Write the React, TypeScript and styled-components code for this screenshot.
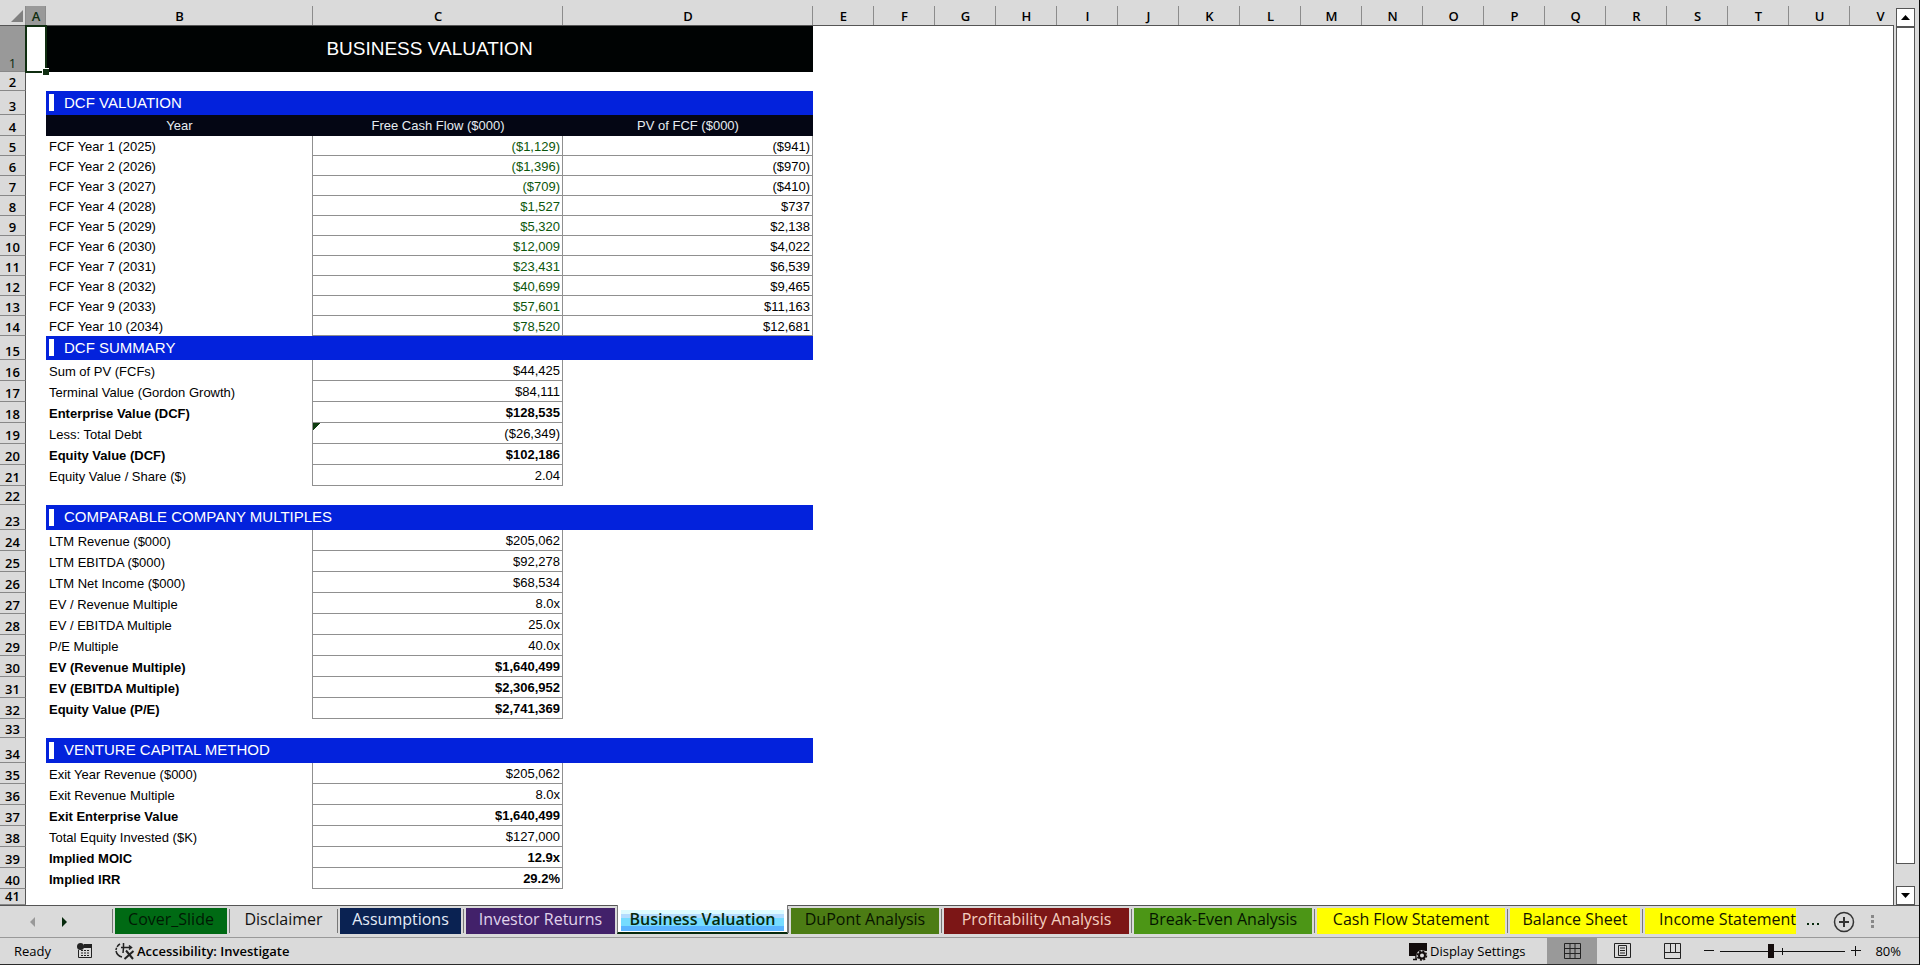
import React from "react";
import styled, { createGlobalStyle } from "styled-components";

const GlobalStyle = createGlobalStyle`
  * { box-sizing: border-box; }
  html, body { margin: 0; height: 100%; }
  #root { height: 100vh; }
  body { overflow: hidden; background: #dadada; }
  button, input { font: inherit; color: inherit; }
`;

const uiFont = `"Open Sans", "Noto Sans", sans-serif`;
const cellFont = `"Liberation Sans", Arial, sans-serif`;

const Window = styled.div`
  height: 100%;
  display: flex;
  flex-direction: column;
  background: #dadada;
  border-right: 1px solid #0a0a0a;
  border-bottom: 1px solid #2a2a2a;
  color: #000;
  font-family: ${uiFont};
`;

const Workspace = styled.main`
  flex: 1;
  min-height: 0;
  display: flex;
`;

const Viewport = styled.div`
  flex: 1;
  min-width: 0;
  overflow: hidden;
  background: linear-gradient(#dadada, #dadada) 0 0 / 100% 25px no-repeat #fff;
`;

const Grid = styled.table`
  table-layout: fixed;
  width: 1911px;
  border-collapse: separate;
  border-spacing: 0;
  font-family: ${cellFont};
  font-size: 13px;
  line-height: 16px;
  td, th { padding: 0; }
`;

const HeadRow = styled.tr`
  height: 26px;
`;

const ColHead = styled.th<{ $selected?: boolean }>`
  font: 600 13px/18px ${uiFont};
  vertical-align: bottom;
  border-bottom: 1px solid #555;
  color: ${(p) => (p.$selected ? "#0f2d10" : "#000")};
  background:
    linear-gradient(#8c8c8c, #8c8c8c) right 6px / 1px 19px no-repeat,
    ${(p) => (p.$selected ? "linear-gradient(#999, #999) 0 6px / 100% 19px no-repeat," : "")}
    linear-gradient(#dadada, #dadada);
`;

const Corner = styled(ColHead)`
  text-align: right;
  svg { display: block; margin: 0 3px 3px auto; }
`;

const Row = styled.tr<{ $h: number }>`
  height: ${(p) => p.$h}px;
`;

const RowHead = styled.th<{ $selected?: boolean }>`
  font: ${(p) => (p.$selected ? 400 : 600)} 13px/15px ${uiFont};
  vertical-align: bottom;
  color: ${(p) => (p.$selected ? "#0f2d10" : "#000")};
  background: ${(p) => (p.$selected ? "#999" : "#dadada")};
  border-right: 1px solid #555;
  border-bottom: 1px solid #888;
`;

const ActiveCell = styled.td`
  position: relative;
  &::before {
    content: "";
    position: absolute;
    inset: -1px;
    border: 2px solid #0f2d10;
    z-index: 1;
  }
  &::after {
    content: "";
    position: absolute;
    right: -3px;
    bottom: -3px;
    width: 6px;
    height: 6px;
    background: #0f2d10;
    border: 1px solid #fff;
    border-width: 1px 0 0 1px;
    z-index: 2;
  }
`;

const TitleCell = styled.td`
  background: #000303;
  color: #fff;
  font-size: 19px;
  line-height: 24px;
  text-align: center;
`;

const SectionCell = styled.td`
  background: #0322dc;
  color: #fff;
  font-size: 15px;
  line-height: 18px;
`;

const SectionTitle = styled.div`
  display: flex;
  align-items: center;
  gap: 10px;
  padding: 0 3px 1px;
  &::before {
    content: "";
    width: 5px;
    height: 17px;
    background: #fff;
  }
`;

const HeaderCell = styled.td`
  background: #040614;
  color: #e6ecf2;
  font-size: 13px;
  text-align: center;
  && { padding-top: 1px; }
`;

const LabelCell = styled.th<{ $bold?: boolean }>`
  text-align: left;
  font-weight: ${(p) => (p.$bold ? 700 : 400)};
  border-right: 1px solid #909090;
  && { padding: 2px 3px 0; }
`;

const ValueCell = styled.td<{ $bold?: boolean; $green?: boolean; $flag?: boolean }>`
  text-align: right;
  font-weight: ${(p) => (p.$bold ? 700 : 400)};
  color: ${(p) => (p.$green ? "#0c560c" : "#000")};
  border-right: 1px solid #909090;
  border-bottom: 1px solid #909090;
  && { padding: 2px 2px 0; }
  ${(p) => (p.$flag ? "background: linear-gradient(135deg, #0f3d10 5px, transparent 5px);" : "")}
`;

const Gutter = styled.div`
  width: 26px;
  padding: 8px 4px 0 3px;
  display: flex;
  flex-direction: column;
  background: linear-gradient(#555, #555) 0 25px / 1px 100% no-repeat;
`;

const ScrollButton = styled.button`
  height: 19px;
  padding: 0;
  display: grid;
  place-items: center;
  background: #fff;
  border: 1px solid #555;
`;

const ScrollTrack = styled.div`
  flex: 1;
  padding-bottom: 22px;
  display: flex;
`;

const ScrollThumb = styled.div`
  flex: 1;
  background: #fff;
  border: 1px solid #555;
`;

const TabBar = styled.nav`
  height: 32px;
  display: flex;
  align-items: flex-start;
  border-top: 1px solid #555;
  font-size: 16px;
  line-height: 22px;
  padding-right: 40px;
`;

const TabArrows = styled.div`
  width: 112px;
  height: 31px;
  display: flex;
  align-items: center;
  gap: 22px;
  padding-left: 27px;
`;

const PlainButton = styled.button`
  display: grid;
  place-items: center;
  padding: 0;
  border: 0;
  background: none;
`;

const TabSlot = styled.div<{ $w: number }>`
  width: ${(p) => p.$w}px;
  flex: none;
  padding: 2px 2px 0 3px;
  background: linear-gradient(#777, #777) 0 3px / 1px 24px no-repeat;
`;

const Tab = styled.button<{ $bg: string; $fg: string; $medium?: boolean; $clipped?: boolean }>`
  display: block;
  width: 100%;
  height: 26px;
  padding: 0 0 4px;
  border: 0;
  background: ${(p) => p.$bg};
  text-align: ${(p) => (p.$clipped ? "right" : "center")};
  white-space: nowrap;
  && {
    color: ${(p) => p.$fg};
    font-weight: ${(p) => (p.$medium ? 500 : 400)};
  }
`;

const ActiveSlot = styled.div<{ $w: number }>`
  width: ${(p) => p.$w}px;
  flex: none;
  height: 29px;
  margin-top: -1px;
  padding: 5px 3px 0;
  background: #fff;
  border-bottom: 2px solid #06290c;
  border-left: 1px solid #777;
  border-right: 1px solid #777;
`;

const ActiveTab = styled.button`
  display: block;
  width: 100%;
  height: 21px;
  padding: 0 0 3px;
  border: 0;
  line-height: 18px;
  white-space: nowrap;
  background: linear-gradient(#dcfbff 0 4px, #b4dcff 4px 8px, #76dcff 8px 16px, #5ab4ff 16px);
  && {
    font-weight: 600;
    color: #06290c;
  }
`;

const TabTools = styled.div`
  height: 31px;
  display: flex;
  align-items: center;
  gap: 13px;
  padding-left: 8px;
`;

const StatusBar = styled.footer`
  height: 27px;
  display: flex;
  align-items: center;
  border-top: 1px solid #999;
  font-size: 13px;
  line-height: 18px;
  padding: 0 18px 0 14px;
`;

const StatusItem = styled.button`
  display: flex;
  align-items: center;
  gap: 2px;
  padding: 0;
  border: 0;
  background: none;
  white-space: nowrap;
`;

const Ready = styled.span`
  width: 63px;
`;

const Accessibility = styled(StatusItem)`
  margin-left: 22px;
  && { font-weight: 600; }
`;

const Spacer = styled.div`
  flex: 1;
`;

const DisplayText = styled.span`
  width: 117px;
  text-align: left;
`;

const ViewButton = styled(PlainButton)<{ $on?: boolean }>`
  width: 50px;
  height: 26px;
  background: ${(p) => (p.$on ? "#999" : "none")};
`;

const ZoomGroup = styled.div`
  display: flex;
  align-items: center;
  gap: 6px;
  margin-left: 7px;
`;

const ZoomRange = styled.input`
  appearance: none;
  width: 125px;
  height: 20px;
  margin: 0;
  background:
    linear-gradient(#111, #111) 62px 7px / 1px 7px no-repeat,
    linear-gradient(#111, #111) 0 10px / 100% 1px no-repeat;
  &::-webkit-slider-thumb {
    appearance: none;
    width: 6px;
    height: 14px;
    background: #140c0c;
  }
`;

const ZoomValue = styled.span`
  width: 34px;
  text-align: right;
`;

type Line = {
  kind: "title" | "gap" | "section" | "head" | "fcf" | "item";
  h: number;
  a?: string;
  b?: string;
  c?: string;
  bold?: boolean;
  flag?: boolean;
};

const item = (a: string, b: string, bold = false, flag = false): Line => ({ kind: "item", h: 21, a, b, bold, flag });
const fcf = (a: string, b: string, c: string): Line => ({ kind: "fcf", h: 20, a, b, c });
const gap: Line = { kind: "gap", h: 19 };

const lines: Line[] = [
  { kind: "title", h: 46, a: "BUSINESS VALUATION" },
  gap,
  { kind: "section", h: 24, a: "DCF VALUATION" },
  { kind: "head", h: 21, a: "Year", b: "Free Cash Flow ($000)", c: "PV of FCF ($000)" },
  fcf("FCF Year 1 (2025)", "($1,129)", "($941)"),
  fcf("FCF Year 2 (2026)", "($1,396)", "($970)"),
  fcf("FCF Year 3 (2027)", "($709)", "($410)"),
  fcf("FCF Year 4 (2028)", "$1,527", "$737"),
  fcf("FCF Year 5 (2029)", "$5,320", "$2,138"),
  fcf("FCF Year 6 (2030)", "$12,009", "$4,022"),
  fcf("FCF Year 7 (2031)", "$23,431", "$6,539"),
  fcf("FCF Year 8 (2032)", "$40,699", "$9,465"),
  fcf("FCF Year 9 (2033)", "$57,601", "$11,163"),
  fcf("FCF Year 10 (2034)", "$78,520", "$12,681"),
  { kind: "section", h: 24, a: "DCF SUMMARY" },
  item("Sum of PV (FCFs)", "$44,425"),
  item("Terminal Value (Gordon Growth)", "$84,111"),
  item("Enterprise Value (DCF)", "$128,535", true),
  item("Less: Total Debt", "($26,349)", false, true),
  item("Equity Value (DCF)", "$102,186", true),
  item("Equity Value / Share ($)", "2.04"),
  gap,
  { kind: "section", h: 25, a: "COMPARABLE COMPANY MULTIPLES" },
  item("LTM Revenue ($000)", "$205,062"),
  item("LTM EBITDA ($000)", "$92,278"),
  item("LTM Net Income ($000)", "$68,534"),
  item("EV / Revenue Multiple", "8.0x"),
  item("EV / EBITDA Multiple", "25.0x"),
  item("P/E Multiple", "40.0x"),
  item("EV (Revenue Multiple)", "$1,640,499", true),
  item("EV (EBITDA Multiple)", "$2,306,952", true),
  item("Equity Value (P/E)", "$2,741,369", true),
  gap,
  { kind: "section", h: 25, a: "VENTURE CAPITAL METHOD" },
  item("Exit Year Revenue ($000)", "$205,062"),
  item("Exit Revenue Multiple", "8.0x"),
  item("Exit Enterprise Value", "$1,640,499", true),
  item("Total Equity Invested ($K)", "$127,000"),
  item("Implied MOIC", "12.9x", true),
  item("Implied IRR", "29.2%", true),
  { kind: "gap", h: 16 },
];

const letters = "ABCDEFGHIJKLMNOPQRSTUV".split("");
const columnWidths = [26, 20, 267, 250, 250, ...Array(18).fill(61)];

const tabs = [
  { name: "Cover_Slide", w: 117, bg: "#006a14", fg: "#001a04" },
  { name: "Disclaimer", w: 108, bg: "transparent", fg: "#111" },
  { name: "Assumptions", w: 126, bg: "#0a2252", fg: "#e4ecf8" },
  { name: "Investor Returns", w: 154, bg: "#42216a", fg: "#e0d4ec" },
  { name: "Business Valuation", w: 171, bg: "", fg: "" },
  { name: "DuPont Analysis", w: 153, bg: "#4c7c14", fg: "#081400" },
  { name: "Profitability Analysis", w: 190, bg: "#7c1616", fg: "#f4cfc0" },
  { name: "Break-Even Analysis", w: 183, bg: "#4c9616", fg: "#041400" },
  { name: "Cash Flow Statement", w: 193, bg: "#ffff00", fg: "#141400", medium: true },
  { name: "Balance Sheet", w: 135, bg: "#ffff00", fg: "#141400", medium: true },
  { name: "Income Statement", w: 156, bg: "#ffff00", fg: "#141400", medium: true, clipped: true },
];

function LineCells({ line }: { line: Line }) {
  switch (line.kind) {
    case "title":
      return <><TitleCell colSpan={3}>{line.a}</TitleCell><td colSpan={18} /></>;
    case "section":
      return <><SectionCell colSpan={3}><SectionTitle>{line.a}</SectionTitle></SectionCell><td colSpan={18} /></>;
    case "head":
      return <><HeaderCell>{line.a}</HeaderCell><HeaderCell>{line.b}</HeaderCell><HeaderCell>{line.c}</HeaderCell><td colSpan={18} /></>;
    case "fcf":
      return (
        <>
          <LabelCell scope="row">{line.a}</LabelCell>
          <ValueCell $green>{line.b}</ValueCell>
          <ValueCell>{line.c}</ValueCell>
          <td colSpan={18} />
        </>
      );
    case "item":
      return (
        <>
          <LabelCell scope="row" $bold={line.bold}>{line.a}</LabelCell>
          <ValueCell $bold={line.bold} $flag={line.flag}>{line.b}</ValueCell>
          <td colSpan={19} />
        </>
      );
    default:
      return <td colSpan={21} />;
  }
}

function Sheet() {
  return (
    <Grid>
      <colgroup>{columnWidths.map((w, i) => <col key={i} width={w} />)}</colgroup>
      <thead>
        <HeadRow>
          <Corner aria-label="Select all">
            <svg width="12" height="12"><path d="M12 0V12H0Z" fill="#808080" /></svg>
          </Corner>
          {letters.map((l, i) => <ColHead key={l} scope="col" $selected={i === 0}>{l}</ColHead>)}
        </HeadRow>
      </thead>
      <tbody>
        {lines.map((line, i) => (
          <Row key={i} $h={line.h}>
            <RowHead scope="row" $selected={i === 0}>{i + 1}</RowHead>
            {i === 0 ? <ActiveCell /> : <td />}
            <LineCells line={line} />
          </Row>
        ))}
      </tbody>
    </Grid>
  );
}

function VerticalScroll() {
  return (
    <Gutter>
      <ScrollButton aria-label="Scroll up"><svg width="9" height="5"><path d="M0 5L4.500 0L9 5Z" /></svg></ScrollButton>
      <ScrollTrack><ScrollThumb /></ScrollTrack>
      <ScrollButton aria-label="Scroll down"><svg width="9" height="5"><path d="M0 0L4.500 5L9 0Z" /></svg></ScrollButton>
    </Gutter>
  );
}

function SheetTabs() {
  return (
    <TabBar>
      <TabArrows>
        <PlainButton aria-label="Previous sheets"><svg width="10" height="10"><path d="M8 0V10L3 5Z" fill="#999" /></svg></PlainButton>
        <PlainButton aria-label="Next sheets"><svg width="10" height="10"><path d="M3 0V10L8 5Z" fill="#06290c" /></svg></PlainButton>
      </TabArrows>
      {tabs.map((t) =>
        t.bg ? (
          <TabSlot key={t.name} $w={t.w}>
            <Tab $bg={t.bg} $fg={t.fg} $medium={t.medium} $clipped={t.clipped}>{t.name}</Tab>
          </TabSlot>
        ) : (
          <ActiveSlot key={t.name} $w={t.w}><ActiveTab aria-current="page">{t.name}</ActiveTab></ActiveSlot>
        )
      )}
      <TabTools>
        <PlainButton aria-label="More sheets">
          <svg width="14" height="12"><path d="M1 7h2v2H1zM6 7h2v2H6zM11 7h2v2h-2z" fill="#06290c" /></svg>
        </PlainButton>
        <PlainButton aria-label="New sheet">
          <svg width="22" height="22" fill="none" stroke="#333">
            <circle cx="11" cy="11" r="9.500" strokeWidth="1.500" />
            <path d="M11 6v10M6 11h10" strokeWidth="2" />
          </svg>
        </PlainButton>
        <PlainButton aria-label="Resize tab bar">
          <svg width="8" height="14"><path d="M3 0h3v3H3zM3 5h3v3H3zM3 10h3v3H3z" fill="#888" /></svg>
        </PlainButton>
      </TabTools>
    </TabBar>
  );
}

function Status() {
  return (
    <StatusBar>
      <Ready>Ready</Ready>
      <StatusItem aria-label="Record macro">
        <svg width="16" height="16" fill="none" stroke="#222">
          <path d="M1.500 7V14.500H14.500V1.500H7" />
          <path d="M7 1h8v4H6z" fill="#222" stroke="none" />
          <circle cx="3.500" cy="3.500" r="3.500" fill="#222" stroke="none" />
          <path d="M4 7.500h9M4 10h9M4 12.500h9" strokeDasharray="2 1" />
        </svg>
      </StatusItem>
      <Accessibility>
        <svg width="20" height="18" fill="none" stroke="#222" strokeWidth="1.500">
          <path d="M5 2A8 8 0 0 0 1 8" strokeDasharray="4 1" />
          <path d="M1 9A8 8 0 0 0 7 15" />
          <path d="M8.500 1V6M6 5.500H16M14 3.500L16.500 5.500L14 7.500M8.500 6L8 11" />
          <path d="M11 8.500L18 17M18.500 9L9.500 17" strokeWidth="2" />
        </svg>
        Accessibility: Investigate
      </Accessibility>
      <Spacer />
      <StatusItem>
        <svg width="20" height="19" fill="none">
          <path d="M1 1h18v8h-5l-4 5H1z" fill="#120c0c" />
          <path d="M5 17.500h4M8 14v4" stroke="#120c0c" strokeWidth="1.500" />
          <circle cx="14" cy="13.500" r="5.500" fill="#dadada" />
          <circle cx="14" cy="13.500" r="3" stroke="#120c0c" strokeWidth="2" />
          <circle cx="14" cy="13.500" r="4.500" stroke="#120c0c" strokeWidth="1.500" strokeDasharray="2 1.500" />
        </svg>
        <DisplayText>Display Settings</DisplayText>
      </StatusItem>
      <ViewButton $on aria-label="Normal view">
        <svg width="17" height="17" fill="none" stroke="#222">
          <path d="M.5.5h16v15H.5zM6 .5v15M11 .5v15M.5 5.500h16M.5 10.500h16" />
        </svg>
      </ViewButton>
      <ViewButton aria-label="Page layout">
        <svg width="17" height="16" fill="none" stroke="#222">
          <path d="M.5.5h16v14H.5zM4.500 2.500h8v10h-8zM6 5h5M6 7.500h5M6 10h5" />
        </svg>
      </ViewButton>
      <ViewButton aria-label="Page break preview">
        <svg width="17" height="16" fill="none" stroke="#222">
          <path d="M.5.5h16v15H.5zM6.500.5v9M11.500.5v9M.5 9.500h16" />
        </svg>
      </ViewButton>
      <ZoomGroup>
        <PlainButton aria-label="Zoom out"><svg width="10" height="10"><path d="M0 4.500h10" stroke="#111" /></svg></PlainButton>
        <ZoomRange type="range" aria-label="Zoom level" min={0} max={100} defaultValue={40} />
        <PlainButton aria-label="Zoom in"><svg width="10" height="10"><path d="M0 4.500h10M4.500 0v10" stroke="#111" /></svg></PlainButton>
        <ZoomValue>80%</ZoomValue>
      </ZoomGroup>
    </StatusBar>
  );
}

export default function App() {
  return (
    <Window>
      <GlobalStyle />
      <Workspace>
        <Viewport><Sheet /></Viewport>
        <VerticalScroll />
      </Workspace>
      <SheetTabs />
      <Status />
    </Window>
  );
}
